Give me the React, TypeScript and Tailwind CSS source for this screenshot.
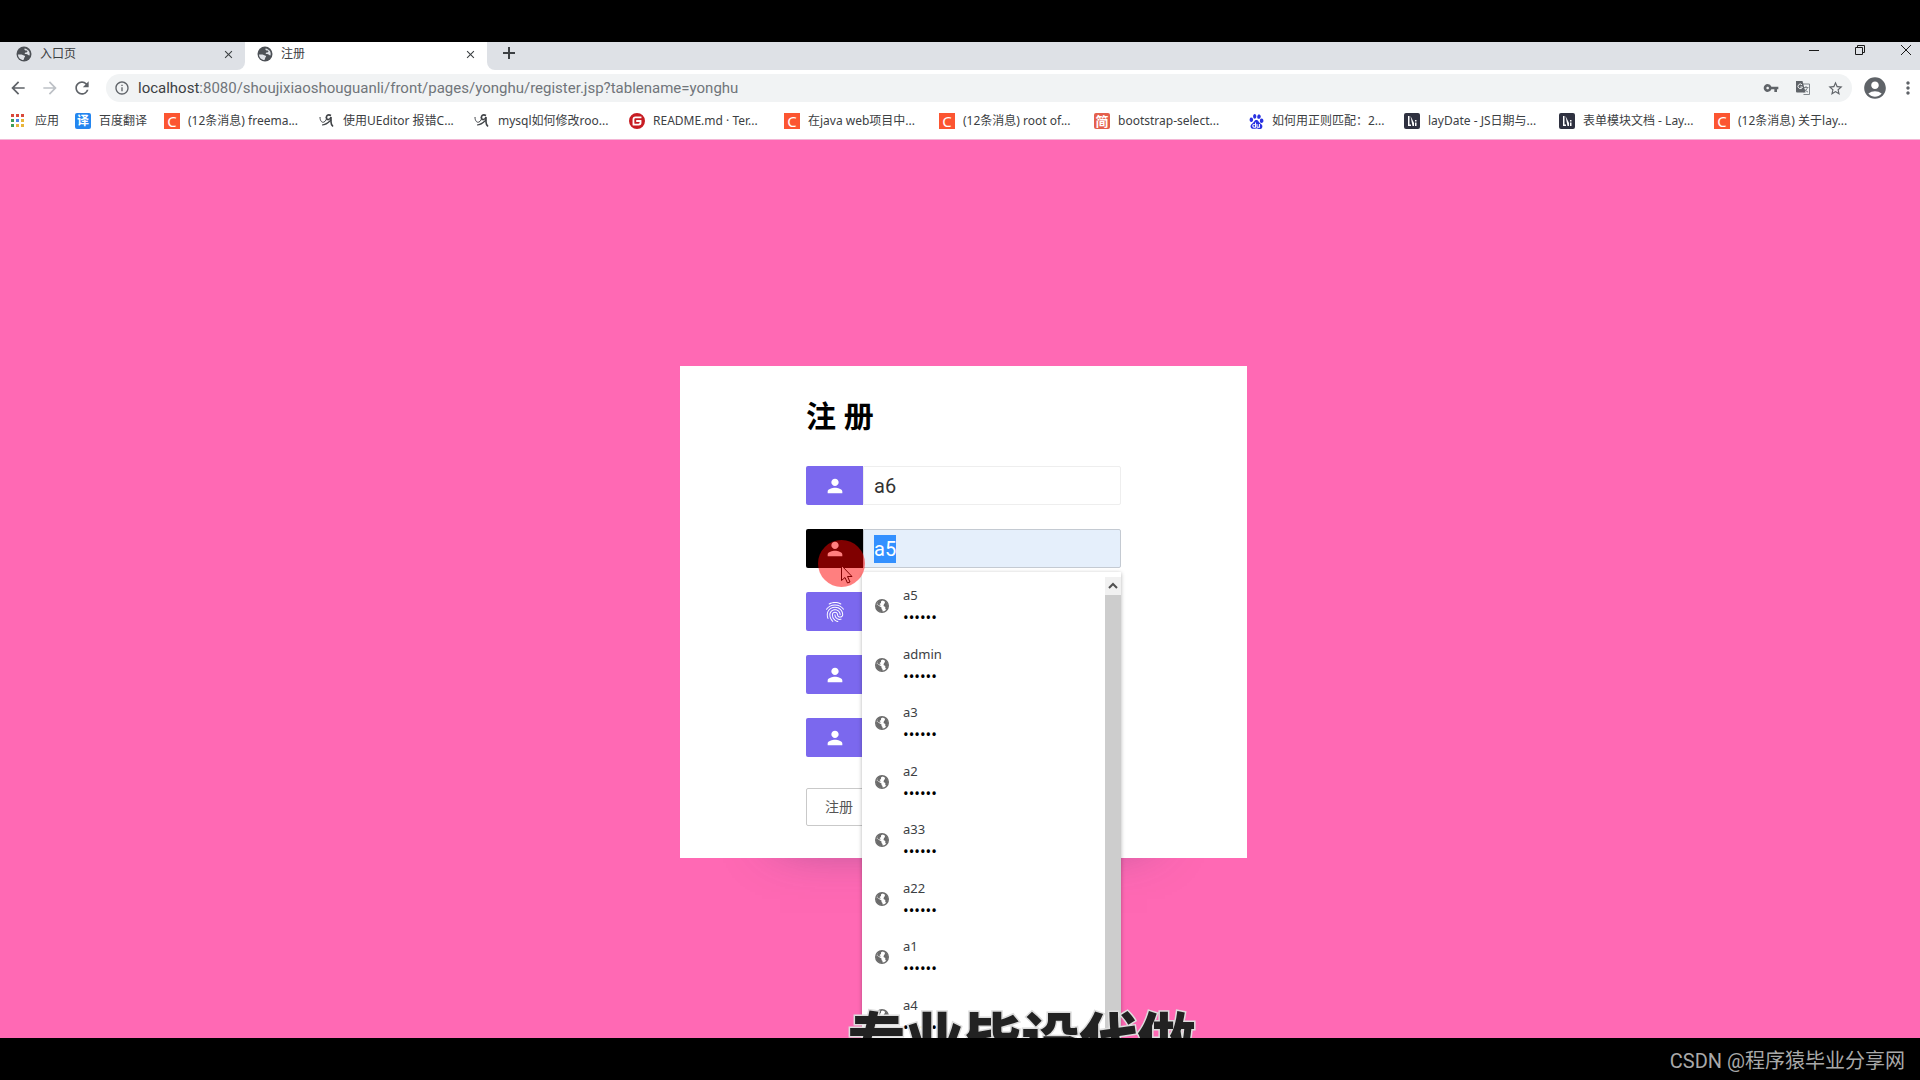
import { useEffect, useRef } from 'react'
import type { ReactNode } from 'react'
import {
  MdAccountCircle,
  MdArrowBack,
  MdArrowForward,
  MdClose,
  MdFingerprint,
  MdInfoOutline,
  MdMoreVert,
  MdPerson,
  MdRefresh,
  MdStarBorder,
  MdVpnKey,
} from 'react-icons/md'
import { SiBaidu, SiGitee } from 'react-icons/si'

const Csdn = () => (
  <span className="w-4 h-4 bg-[#fc5531] text-white text-[15px] leading-4 text-center">C</span>
)

const Jianshu = () => (
  <span className="w-4 h-4 rounded-xs bg-[#e4604c] text-white text-[13px] leading-4 text-center font-bold">简</span>
)

const Fanyi = () => (
  <span className="w-4 h-4 rounded-xs bg-[#2486f0] text-white text-[12px] leading-4 text-center font-bold">译</span>
)

const Layui = () => (
  <svg viewBox="0 0 16 16" className="w-4 h-4">
    <rect width="16" height="16" rx="2" fill="#2f3140" />
    <path d="M4 3h1.500v8.500H7V13H4z" fill="#fff" />
    <path d="M6.500 3l3.500 7v3H8.500z" fill="#fff" />
    <path d="M11 7h1.500v1.500H11zM11 9.500h1.500V13H11z" fill="#fff" />
  </svg>
)

const Ueditor = () => (
  <svg viewBox="0 0 16 16" className="w-4 h-4" fill="none" stroke="#3f4246">
    <path d="M1 4c0 4 2 6 4 5s3-3 2-5" strokeWidth="1" />
    <path d="M12 2.500c-3-1.500-5 0-4.500 2.500s3.500 2 4.500-1v5c0 2 1 3.500 2 4.500" strokeWidth="1.600" />
    <path d="M3 12c3 0 6-2 9-5" strokeWidth="1.200" />
  </svg>
)

const AppsGrid = () => (
  <svg viewBox="0 0 14 14" className="w-3.5 h-3.5">
    <path d="M0 0h3v3H0zM5 0h3v3H5zM10 0h3v3h-3z" fill="#d9493b" />
    <path d="M0 5h3v3H0z" fill="#3c9d5b" />
    <path d="M5 5h3v3H5z" fill="#4a86e8" />
    <path d="M10 5h3v3h-3z" fill="#e8b53a" />
    <path d="M0 10h3v3H0z" fill="#3c9d5b" />
    <path d="M5 10h3v3H5zM10 10h3v3h-3z" fill="#e8b53a" />
  </svg>
)

const TranslateIcon = () => (
  <svg viewBox="0 0 16 16" className="w-4 h-4" fill="none">
    <path d="M7 4h7.500v10.500H8.500" stroke="#80868b" />
    <path d="M8.500 7.500h5M11 6v1.500M12.500 7.500c-.5 2-2 3.500-4 4.500M9.500 9c1 1.500 2 2.500 3.500 3" stroke="#80868b" />
    <path d="M1 1h6.500l3 11.500H2a1 1 0 0 1-1-1z" fill="#5f6368" />
    <path d="M7 4.800A2.300 2.300 0 1 0 7.500 7H5.300" stroke="#f1f3f4" />
  </svg>
)

const TabGlobe = () => (
  <svg viewBox="0 0 16 16" className="w-4 h-4 shrink-0">
    <circle cx="8" cy="8" r="7.500" fill="#4d5156" />
    <path d="M2 8.500h3.500c1 0 1.500 1 2.500 1s1.500 1 .5 1.800L7.500 14C4.500 14 2 11.500 2 8.500z" fill="#dee1e6" />
    <path d="M8.500 2.500c-.5 1.500.5 2 2 2s1 2-.5 2-2 1.500 0 1.500 2 1.500 3.500 1.500c1-3-1-6.500-5-7z" fill="#dee1e6" />
  </svg>
)

const SiteGlobe = () => (
  <svg viewBox="0 0 16 16" className="w-4 h-4 shrink-0">
    <circle cx="8" cy="8" r="6.300" fill="#fff" stroke="#6b6b6b" strokeWidth="1.400" />
    <path d="M2.500 6l2.500 2 2.500 1.500v1.500l1 1v2C4.500 14 2 11.500 2 8z" fill="#6b6b6b" />
    <path d="M4 3.500C5.500 2 7 1.800 8.500 2L7 3.500v1.500L5.500 6 7 7.500H5L3 6z" fill="#6b6b6b" />
    <path d="M10.500 2.500c2 1 3.500 3 3.500 5.500 0 1.500-.5 2.800-1.500 4l-1.200-1v-2l-1.800-1L10 6l1-1z" fill="#6b6b6b" />
  </svg>
)

const bookmarks: { icon: ReactNode; label: string }[] = [
  { icon: <Csdn />, label: '(12条消息) freema...' },
  { icon: <Ueditor />, label: '使用UEditor 报错C...' },
  { icon: <Ueditor />, label: 'mysql如何修改roo...' },
  { icon: <SiGitee size={16} className="text-[#c71d23]" />, label: 'README.md · Ter...' },
  { icon: <Csdn />, label: '在java web项目中...' },
  { icon: <Csdn />, label: '(12条消息) root of...' },
  { icon: <Jianshu />, label: 'bootstrap-select...' },
  { icon: <SiBaidu size={15} className="text-[#2932e1]" />, label: '如何用正则匹配：2...' },
  { icon: <Layui />, label: 'layDate - JS日期与...' },
  { icon: <Layui />, label: '表单模块文档 - Lay...' },
  { icon: <Csdn />, label: '(12条消息) 关于lay...' },
]

const accounts = ['a5', 'admin', 'a3', 'a2', 'a33', 'a22', 'a1', 'a4']

const Tab = ({ title, active }: { title: string; active?: boolean }) => (
  <div className={`flex items-center h-7 pr-2.5 pb-1 ${active ? 'w-[242px] pl-3 bg-white' : 'w-[245px] pl-4 bg-[#dee1e6] rounded-br-lg'}`}>
    <TabGlobe />
    <span className="ml-2 flex-1 text-[#3c4043]">{title}</span>
    <button aria-label="关闭标签页" className="text-[#3c4043]">
      <MdClose size={13} />
    </button>
  </div>
)

const TabStrip = () => (
  <div className="flex h-7">
    <Tab title="入口页" />
    <Tab title="注册" active />
    <div className="flex flex-1 items-start rounded-bl-lg bg-[#dee1e6]">
      <button aria-label="新标签页" className="ml-[15px] mt-1 text-[#3c4043]">
        <svg viewBox="0 0 14 14" className="w-3.5 h-3.5" stroke="currentColor" strokeWidth="2">
          <path d="M7 1v12M1 7h12" />
        </svg>
      </button>
      <div className="ml-auto flex gap-[34px] pr-2 pt-0.5 text-[#1a1a1a]">
        <button aria-label="最小化">
          <svg viewBox="0 0 12 12" className="w-3 h-3" stroke="currentColor">
            <path d="M1 6.500h10" />
          </svg>
        </button>
        <button aria-label="还原">
          <svg viewBox="0 0 12 12" className="w-3 h-3" fill="none" stroke="currentColor">
            <path d="M1.500 3.500h7v7h-7zM3.500 3.500v-2h7v7h-2" />
          </svg>
        </button>
        <button aria-label="关闭">
          <svg viewBox="0 0 12 12" className="w-3 h-3" stroke="currentColor">
            <path d="M1 1l10 10M11 1L1 11" />
          </svg>
        </button>
      </div>
    </div>
  </div>
)

const Toolbar = () => (
  <div className="flex items-center h-9 pl-2 pr-0.5 text-[#5f6368]">
    <button aria-label="后退" className="w-5">
      <MdArrowBack size={20} />
    </button>
    <button aria-label="前进" className="w-5 ml-3 text-[#bdc1c6]">
      <MdArrowForward size={20} />
    </button>
    <button aria-label="重新加载" className="w-5 ml-3">
      <MdRefresh size={20} />
    </button>
    <div className="flex flex-1 items-center h-7 ml-3.5 px-2 rounded-full bg-[#f1f3f4]">
      <MdInfoOutline size={16} />
      <div className="ml-2 flex-1 text-[15px] leading-5 text-[#70757a] font-[Roboto,sans-serif]">
        <span className="text-[#3c4043]">localhost</span>
        :8080/shoujixiaoshouguanli/front/pages/yonghu/register.jsp?tablename=yonghu
      </div>
      <div className="flex items-center gap-4">
        <button aria-label="管理密码">
          <MdVpnKey size={16} />
        </button>
        <button aria-label="翻译此页">
          <TranslateIcon />
        </button>
        <button aria-label="为此页添加书签">
          <MdStarBorder size={17} />
        </button>
      </div>
    </div>
    <button aria-label="用户" className="ml-2.5">
      <MdAccountCircle size={26} />
    </button>
    <button aria-label="菜单" className="ml-2.5">
      <MdMoreVert size={20} />
    </button>
  </div>
)

const BookmarkBar = () => (
  <nav className="flex items-center h-[34px] pl-[11px] pb-[3px] border-b border-[#f3b6d5] text-[#3c4043] whitespace-nowrap overflow-hidden">
    <a href="#" className="flex items-center gap-2.5 w-16 shrink-0">
      <AppsGrid />
      应用
    </a>
    <a href="#" className="flex items-center gap-2 w-[89px] shrink-0">
      <Fanyi />
      百度翻译
    </a>
    {bookmarks.map(({ icon, label }) => (
      <a key={label} href="#" className="flex items-center gap-2 w-[155px] shrink-0">
        {icon}
        {label}
      </a>
    ))}
  </nav>
)

interface FieldProps {
  label: string;
  value?: string;
  icon?: ReactNode;
  focused?: boolean;
}

const Field = ({ label, value = '', icon = <MdPerson size={22} />, focused }: FieldProps) => {
  const ref = useRef<HTMLInputElement>(null)

  useEffect(() => {
    if (focused) {
      ref.current?.focus()
      ref.current?.select()
    }
  }, [focused])

  return (
    <label className="flex h-[39px]">
      <span className={`flex items-center justify-center w-[57px] rounded-l-xs text-white ${focused ? 'bg-black' : 'bg-[#7b68ee]'}`}>
        {icon}
      </span>
      <input
        ref={ref}
        aria-label={label}
        defaultValue={value}
        className={`flex-1 min-w-0 px-2.5 border rounded-r-xs text-xl text-[#333] font-[Roboto,sans-serif] outline-none selection:bg-[#3390ff] selection:text-white ${focused ? 'bg-[#e5effb] border-[#c4cad2]' : 'bg-white border-[#eee]'}`}
      />
    </label>
  )
}

// saved logins, clipped by the bottom of the page like the native popup
const AccountMenu = () => (
  <div className="absolute top-full left-14 right-0 mt-1 z-10 flex h-[466px] overflow-hidden bg-white shadow-[0_1px_4px_rgba(0,0,0,0.3)]">
    <ul className="flex flex-col flex-1 h-[473px] shrink-0 pt-[5px]">
      {accounts.map((name) => (
        <li key={name} className="flex flex-1 items-center pl-3">
          <SiteGlobe />
          <div className="ml-[13px] text-[13px] leading-[22px] text-[#3c4043]">
            <p>{name}</p>
            <p className="text-[15px] text-black">••••••</p>
          </div>
        </li>
      ))}
    </ul>
    <div className="w-4 mt-[5px] bg-[#cdcdcd]">
      <div className="flex items-center justify-center h-[18px] bg-[#f1f1f1]">
        <svg viewBox="0 0 10 10" className="w-2.5 h-2.5" fill="none" stroke="#505050" strokeWidth="2">
          <path d="M1 7l4-4 4 4" />
        </svg>
      </div>
    </div>
  </div>
)

const Pointer = () => (
  <svg viewBox="0 0 47 47" className="absolute left-3 top-[11px] w-[47px] h-[47px] z-20 pointer-events-none">
    <path d="M23.500 25.500v15l3.500-3 2.500 5.500 2.500-1-2.500-5.500h4.500z" fill="#fff" stroke="#000" />
    <circle cx="23.500" cy="23.500" r="23.500" fill="#f00" fillOpacity="0.5" />
  </svg>
)

const RegisterCard = () => (
  <form className="w-[567px] px-[126px] pt-7 pb-8 bg-white shadow-[0_80px_50px_-100px_rgba(60,60,110,0.7)]">
    <h1 className="text-[30px] leading-[44px] font-bold text-black">注 册</h1>
    <div className="flex flex-col gap-6 mt-7">
      <Field label="账号" value="a6" />
      <div className="relative">
        <Field label="姓名" value="a5" focused />
        <Pointer />
        <AccountMenu />
      </div>
      <Field label="密码" icon={<MdFingerprint size={24} />} />
      <Field label="手机" />
      <Field label="邮箱" />
    </div>
    <button type="button" className="block h-[38px] mt-[31px] px-[18px] border border-[#c9c9c9] rounded-xs text-sm text-[#555]">
      注册
    </button>
  </form>
)

export default function App() {
  return (
    <div className="flex flex-col min-h-screen bg-black pt-[42px] text-[12px] leading-4 font-['Noto_Sans','Noto_Sans_CJK_SC',sans-serif]">
      <header className="bg-white">
        <TabStrip />
        <Toolbar />
        <BookmarkBar />
      </header>
      <main className="relative flex-1 flex flex-col items-center pt-[226px] pl-[7px] bg-[#ff69b4]">
        <RegisterCard />
        <div className="absolute bottom-0 left-0 right-0 z-30 flex justify-center h-[34px] pl-[123px] overflow-hidden">
          <p className="text-[58px] leading-[74px] -mt-0.5 font-black text-[#222] whitespace-nowrap [-webkit-text-stroke:3px_#ddd] [paint-order:stroke_fill]">
            专业毕设代做
          </p>
        </div>
      </main>
      <footer className="relative z-40 flex items-center justify-end h-[42px] pt-1 pr-[15px] bg-black text-xl text-[#a9a9a9] font-[Roboto,'Noto_Sans_CJK_SC',sans-serif]">
        CSDN @程序猿毕业分享网
      </footer>
    </div>
  )
}
